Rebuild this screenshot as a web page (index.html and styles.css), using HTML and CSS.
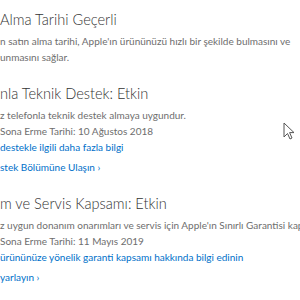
FILE: index.html
```html
<!DOCTYPE html>
<html lang="tr">
<head>
    <meta charset="UTF-8">
    <meta name="viewport" content="width=device-width, initial-scale=1.0">
    <title>Kapsam</title>
    <link rel="stylesheet" href="styles.css">
</head>
<body>

<div class="coverage">

    <!-- Satın alma tarihi -->
    <div class="section">
        <h2>Alma Tarihi Geçerli</h2>
        <p class="text">n satın alma tarihi, Apple'ın ürününüzü hızlı bir şekilde bulmasını ve<br>unmasını sağlar.</p>
    </div>

    <!-- Telefon destek -->
    <div class="section">
        <h2>nla Teknik Destek: Etkin</h2>
        <p class="text">z telefonla teknik destek almaya uygundur.<br>Sona Erme Tarihi: 10 Ağustos 2018</p>
        <a class="more" href="#">destekle ilgili daha fazla bilgi</a>
        <a class="action" href="#">stek Bölümüne Ulaşın ›</a>
    </div>

    <!-- Donanım onarım -->
    <div class="section">
        <h2>m ve Servis Kapsamı: Etkin</h2>
        <p class="text">z uygun donanım onarımları ve servis için Apple'ın Sınırlı Garantisi kapsamındadır.<br>Sona Erme Tarihi: 11 Mayıs 2019</p>
        <a class="more" href="#">ürününüze yönelik garanti kapsamı hakkında bilgi edinin</a>
        <a class="action" href="#">yarlayın ›</a>
    </div>

</div>

<svg class="cursor" width="12" height="19" viewBox="0 0 12 19">
    <path d="M1 1 L1 15 L4.5 11.5 L7 17 L9 16 L6.6 10.6 L11 10.6 Z" fill="#fff" stroke="#555" stroke-width="1"/>
</svg>

</body>
</html>
```

FILE: styles.css
```css
body {
    font-family: Lato, "Open Sans", sans-serif;
    background-color: #fff;
    margin: 0;
    width: 300px;
    height: 300px;
    overflow: hidden;
    position: relative;
}

.coverage {
    padding-top: 9px;
    white-space: nowrap;
}

.section {
    margin-bottom: 18px;
}

h2 {
    font-size: 14.6px;
    font-weight: 300;
    line-height: 22px;
    color: #333;
    margin: 0 0 2px 0;
}

.text {
    font-size: 10px;
    line-height: 16px;
    color: #6e6e6e;
    margin: 0;
}

.more, .action {
    display: block;
    font-size: 10px;
    line-height: 16px;
    color: #0070c9;
    text-decoration: none;
}

.action {
    margin-top: 4px;
}

.cursor {
    position: absolute;
    left: 283px;
    top: 122px;
}
```
